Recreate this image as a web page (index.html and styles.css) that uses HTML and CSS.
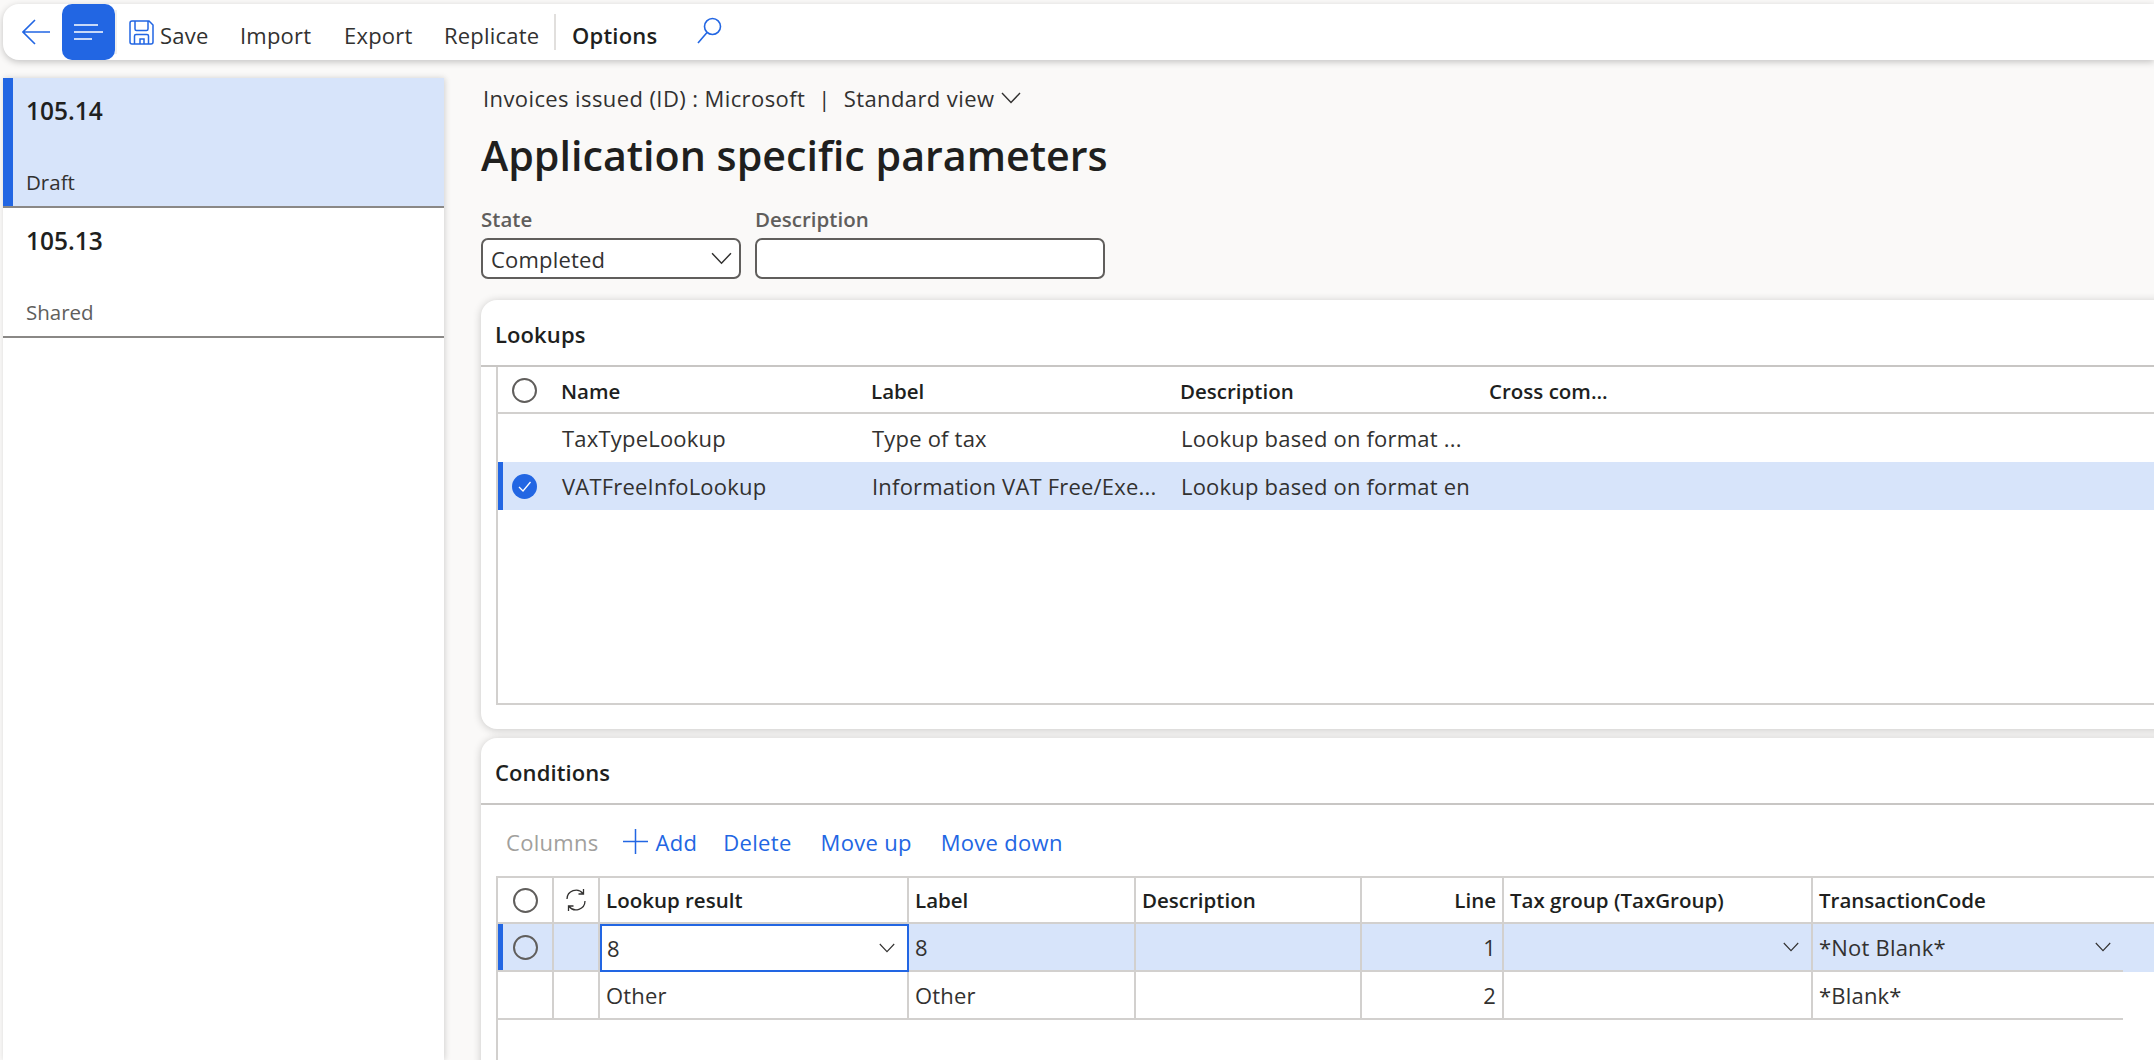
FILE: index.html
```html
<!DOCTYPE html>
<html lang="en">
<head>
  <meta charset="UTF-8">
  <title>Application specific parameters</title>
  <link rel="stylesheet" href="styles.css">
</head>
<body>
  <svg class="defs" width="0" height="0">
    <symbol id="chev" viewBox="0 0 20 12"><path d="M1 1l9 9.500 9-9.500" fill="none" stroke="currentColor" stroke-width="1.400"/></symbol>
  </svg>

  <header class="toolbar">
    <a class="tool-icon"><svg width="28" height="26" viewBox="0 0 28 26"><path d="M13 1L1 13l12 12M1 13h27" fill="none" stroke="#2266e3" stroke-width="1.600"/></svg></a>
    <a class="tool-menu"><svg width="29" height="16" viewBox="0 0 29 16"><path d="M0 1h24M0 8h29M0 15h18" stroke="#fff" stroke-width="1.700"/></svg></a>
    <span class="tool-sep"></span>
    <a class="tool-item save"><svg width="25" height="25" viewBox="0 0 25 25"><path d="M1 3a2 2 0 0 1 2-2h17l4 4v17a2 2 0 0 1-2 2H3a2 2 0 0 1-2-2zM6 1v8a1.500 1.500 0 0 0 1.500 1.500h10A1.500 1.500 0 0 0 19 9V1M5.500 24v-8a1.500 1.500 0 0 1 1.500-1.500h11a1.500 1.500 0 0 1 1.500 1.500v8M11 24v-5h4v5" fill="none" stroke="#2266e3" stroke-width="1.500"/></svg><span>Save</span></a>
    <a class="tool-item">Import</a>
    <a class="tool-item">Export</a>
    <a class="tool-item">Replicate</a>
    <span class="tool-line"></span>
    <a class="tool-item strong">Options</a>
    <a class="tool-search"><svg width="25" height="27" viewBox="0 0 25 27"><circle cx="15.500" cy="9.500" r="8" fill="none" stroke="#2266e3" stroke-width="1.600"/><path d="M10 15.500L1 26" stroke="#2266e3" stroke-width="1.600"/></svg></a>
  </header>

  <div class="shell">
    <nav class="side">
      <div class="side-item active">
        <div class="ver">105.14</div>
        <div class="status">Draft</div>
      </div>
      <div class="side-item">
        <div class="ver">105.13</div>
        <div class="status muted">Shared</div>
      </div>
    </nav>

    <main class="main">
      <div class="crumb"><span>Invoices issued (ID) : Microsoft</span><span class="crumb-sep">|</span><span>Standard view</span><svg class="crumb-chev" width="20" height="12"><use href="#chev"/></svg></div>
      <h1 class="title">Application specific parameters</h1>

      <div class="form-row">
        <div class="field state">
          <label class="field-label">State</label>
          <div class="control">Completed<svg width="21" height="13"><use href="#chev"/></svg></div>
        </div>
        <div class="field descr">
          <label class="field-label">Description</label>
          <div class="control"></div>
        </div>
      </div>

      <section class="card lookups">
        <h2 class="card-title">Lookups</h2>
        <div class="lk-grid">
          <div class="lk-row lk-head">
            <div class="check"><i class="radio"></i></div>
            <div>Name</div><div>Label</div><div>Description</div><div>Cross com...</div>
          </div>
          <div class="lk-row">
            <div class="check"></div>
            <div class="cell">TaxTypeLookup</div><div class="cell">Type of tax</div><div class="cell">Lookup based on format ...</div><div></div>
          </div>
          <div class="lk-row selected">
            <div class="check"><svg width="25" height="25" viewBox="0 0 25 25"><circle cx="12.500" cy="12.500" r="12.500" fill="#2266e3"/><path d="M7 13l4 4 7.500-9" fill="none" stroke="#fff" stroke-width="1.300"/></svg></div>
            <div class="cell">VATFreeInfoLookup</div><div class="cell">Information VAT Free/Exe...</div><div class="cell clip">Lookup based on format en</div><div></div>
          </div>
        </div>
      </section>

      <section class="card conditions">
        <h2 class="card-title">Conditions</h2>
        <div class="cond-bar">
          <a class="off">Columns</a>
          <a class="add"><svg width="25" height="25" viewBox="0 0 25 25"><path d="M12.500 0v25M0 12.500h25" stroke="#2266e3" stroke-width="1.500"/></svg>Add</a>
          <a class="del">Delete</a>
          <a class="up">Move up</a>
          <a>Move down</a>
        </div>
        <div class="cd-grid">
          <div class="cd-row cd-head">
            <div class="check"><i class="radio"></i></div>
            <div class="check"><svg width="24" height="24" viewBox="0 0 24 24"><path d="M3 11a9 9 0 0 1 16-5.500M21 13a9 9 0 0 1-16 5.500M19.500 1v5h-5M4.500 23v-5h5" fill="none" stroke="#323130" stroke-width="1.300"/></svg></div>
            <div>Lookup result</div><div>Label</div><div>Description</div><div class="num">Line</div><div>Tax group (TaxGroup)</div><div>TransactionCode</div>
          </div>
          <div class="cd-row selected">
            <div class="check"><i class="radio"></i></div>
            <div></div>
            <div class="focus">8<svg width="16" height="10"><use href="#chev"/></svg></div>
            <div class="cell">8</div><div></div>
            <div class="cell num">1</div>
            <div class="cell drop"><svg width="16" height="10"><use href="#chev"/></svg></div>
            <div class="cell drop">*Not Blank*<svg width="16" height="10"><use href="#chev"/></svg></div>
          </div>
          <div class="cd-row">
            <div></div><div></div>
            <div class="cell">Other</div><div class="cell">Other</div><div></div>
            <div class="cell num">2</div><div></div>
            <div class="cell">*Blank*</div>
          </div>
        </div>
      </section>
    </main>
  </div>
</body>
</html>
```

FILE: styles.css
```css
* { box-sizing: border-box; }
html, body { margin: 0; height: 100%; overflow: hidden; }
body { background: #faf9f8; color: #201f1e; font-family: "Open Sans", "Noto Sans", sans-serif; font-size: 22px; letter-spacing: .2px; }
.defs { position: absolute; }
svg { display: block; flex: none; }

/* top bar */
.toolbar { margin: 4px 0 0 3px; height: 56px; background: #fff; border-radius: 16px 0 0 16px; box-shadow: 0 2px 7px rgba(0,0,0,.22); display: grid; grid-template-columns: 59px 53px 14px 111px 104px 100px 110px 18px 125px 40px; align-items: center; }
.tool-icon { padding-left: 19px; }
.tool-menu { height: 56px; background: #2266e3; border-radius: 10px; display: flex; align-items: center; justify-content: center; padding-right: 1px; }
.tool-sep { width: 2px; height: 44px; background: #f0efee; }
.tool-item { color: #323130; padding-top: 6px; white-space: nowrap; }
.tool-item.save { display: flex; align-items: center; gap: 6px; padding-top: 0; }
.tool-item.save span { padding-top: 6px; }
.tool-item.strong { font-weight: 600; color: #201f1e; }
.tool-line { width: 2px; height: 36px; background: #e1dfdd; }
.tool-search { padding-bottom: 4px; }

.shell { display: flex; height: 1000px; }

/* version list */
.side { width: 441px; margin: 18px 0 0 3px; background: #fff; box-shadow: 1px 0 6px rgba(0,0,0,.16); }
.side-item { height: 130px; padding: 15px 0 0 23px; border-bottom: 2px solid #8a8886; }
.side-item.active { background: #d7e4fa; box-shadow: inset 10px 0 0 #2266e3; }
.ver { font-size: 24.500px; font-weight: 600; height: 36px; line-height: 36px; letter-spacing: 0; }
.status { margin-top: 39px; height: 28px; line-height: 28px; font-size: 20.500px; letter-spacing: 0; color: #323130; }
.status.muted { color: #605e5c; }

.main { flex: 1; min-width: 0; padding: 22px 0 0 37px; }
.crumb { display: flex; align-items: center; height: 32px; color: #323130; padding-left: 2px; letter-spacing: .4px; }
.crumb-sep { margin: 0 13px 0 13px; }
.crumb-chev { margin-left: 7px; }
.title { margin: 16px 0 0; height: 50px; line-height: 50px; font-size: 41.200px; font-weight: 600; letter-spacing: 0; }

.form-row { display: flex; margin-top: 27px; }
.field { margin-right: 14px; }
.field.state { width: 260px; }
.field.descr { width: 350px; }
.field-label { display: block; height: 24px; line-height: 24px; font-size: 20.500px; font-weight: 600; letter-spacing: 0; color: #605e5c; }
.control { margin-top: 7px; height: 41px; border: 2px solid #605e5c; border-radius: 7px; padding: 0 7px 0 8px; display: flex; align-items: center; justify-content: space-between; color: #323130; background: #fff; }

/* cards */
.card { margin-right: -24px; background: #fff; border-radius: 16px; box-shadow: 0 1px 8px rgba(0,0,0,.2); }
.lookups { margin-top: 21px; height: 429px; padding-bottom: 24px; display: flex; flex-direction: column; }
.conditions { margin-top: 9px; height: 340px; }
.card-title { margin: 0; height: 67px; padding-left: 14px; line-height: 68px; font-size: 22px; font-weight: 600; letter-spacing: .1px; border-bottom: 2px solid #c8c6c4; }
.check { display: flex; align-items: center; justify-content: center; }
.radio { display: block; width: 25px; height: 25px; border: 2px solid #605e5c; border-radius: 50%; }
.cell { color: #323130; white-space: nowrap; overflow: hidden; }
.selected { background: #d7e4fa; }

/* lookups grid */
.lk-grid { flex: 1; margin-left: 15px; border-left: 2px solid #d2d0ce; border-bottom: 2px solid #d2d0ce; }
.lk-row { display: grid; grid-template-columns: 63px 310px 309px 309px 1fr; height: 48px; align-items: center; }
.lk-row .check { justify-content: flex-start; padding-left: 14px; height: 100%; }
.lk-row .cell { padding-left: 1px; padding-right: 14px; }
.lk-row .cell.clip { text-overflow: clip; }
.lk-head { height: 47px; padding-top: 2px; font-size: 20.500px; font-weight: 600; letter-spacing: 0; border-bottom: 2px solid #d2d0ce; }
.lk-row.selected { box-shadow: inset 5px 0 0 #2266e3; }

/* conditions grid */
.cond-bar { display: flex; align-items: center; height: 71px; padding: 2px 0 0 25px; color: #2266e3; letter-spacing: .3px; }
.cond-bar .off { color: #a19f9d; margin-right: 24px; }
.cond-bar .add { display: flex; align-items: center; gap: 8px; margin-right: 26px; }
.cond-bar .del { margin-right: 29px; }
.cond-bar .up { margin-right: 29px; }
.cd-grid { margin-left: 15px; height: 200px; border-left: 2px solid #d2d0ce; border-top: 2px solid #d2d0ce; }
.cd-row { display: grid; grid-template-columns: 56px 46px 309px 227px 226px 142px 309px 1fr; height: 48px; }
.cd-row > div { border-right: 2px solid #d2d0ce; border-bottom: 2px solid #d2d0ce; display: flex; align-items: center; padding-left: 6px; }
.cd-row > .check { padding-left: 0; }
.cd-row > div:last-child { border-right: 0; width: 310px; }
.cd-head { height: 46px; font-size: 20.500px; font-weight: 600; letter-spacing: 0; }
.cd-head > div:last-child { width: auto; }
.cd-row > .num { justify-content: flex-end; padding-right: 6px; }
.drop svg { margin-left: auto; margin-right: 12px; }
.cd-row.selected { box-shadow: inset 5px 0 0 #2266e3; }
.cd-row > .focus { background: #fff; border: 2px solid #2266e3; justify-content: space-between; padding: 0 12px 0 5px; color: #323130; }
```
